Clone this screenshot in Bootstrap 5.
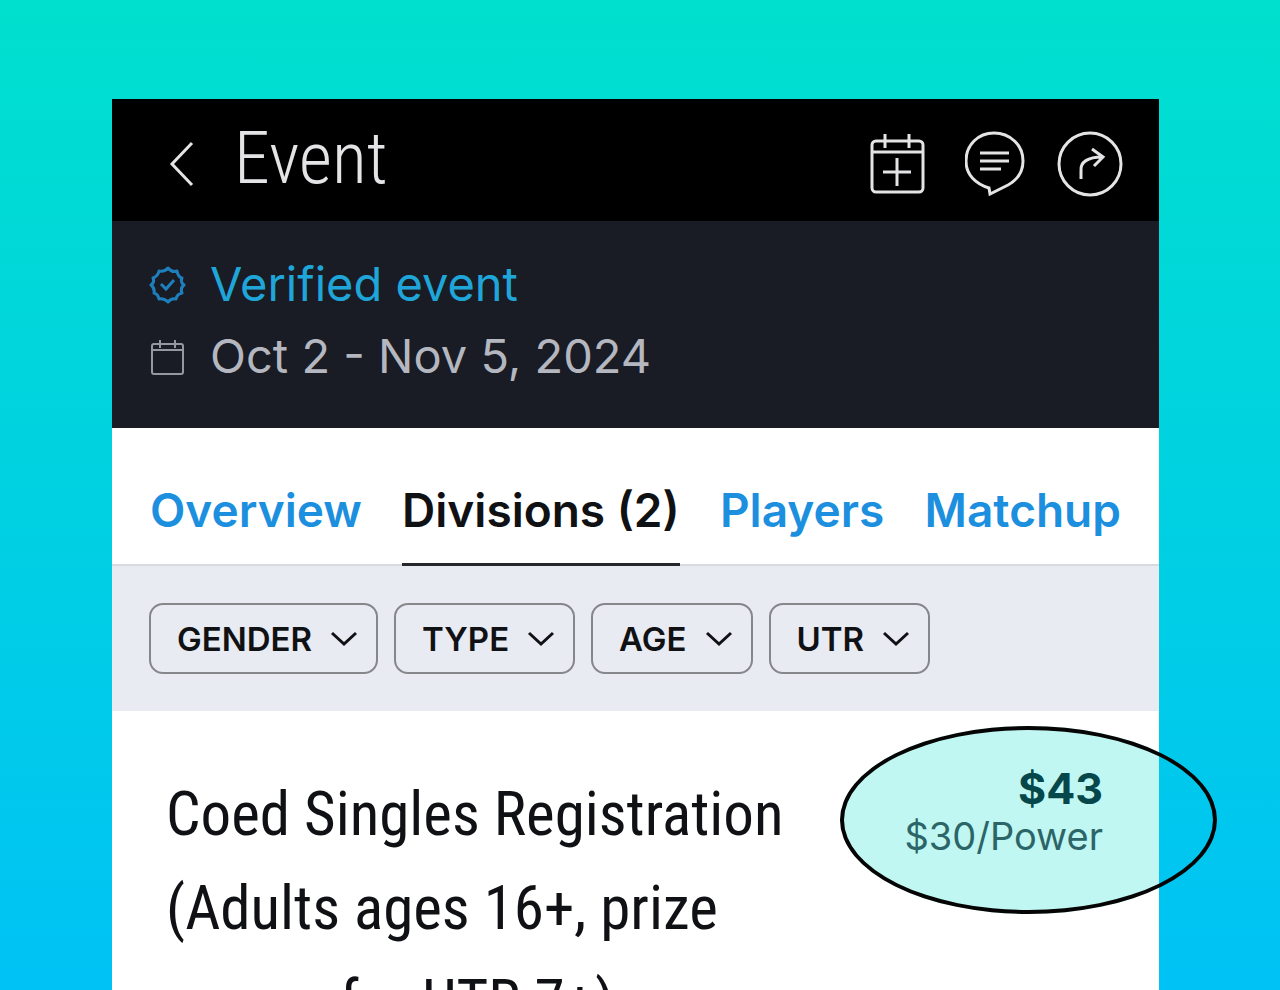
<!DOCTYPE html>
<html lang="en">
<head>
<meta charset="utf-8">
<meta name="viewport" content="width=device-width, initial-scale=1">
<title>Event</title>
<link href="https://cdn.jsdelivr.net/npm/bootstrap@5.3.0/dist/css/bootstrap.min.css" rel="stylesheet">
<style>
  body { font-family: Inter, "Liberation Sans", sans-serif; color: #101114; }
  .stage { padding: 99px 121px 0 112px; background: linear-gradient(#00e0ce, #00c2f5); }
  .display-type { font-family: "Roboto Condensed", "Liberation Sans Narrow", "Liberation Sans", sans-serif; font-weight: 400; }
  .topbar { height: 122px; padding: 8px 36px 0 56px; background: #000; color: #e4e4e6; }
  .topbar h1 { padding: 0 0 10px 40px; font-size: 72px; line-height: 80px; font-weight: 300; }
  .topbar .btn { color: inherit; }
  .details { height: 207px; padding: 27px 36px; background: #191c24; font-size: 47px; line-height: 72px; }
  .details .verified { color: #1fa5d8; }
  .details .when { color: #b4b7bf; }
  .tabs { height: 138px; padding: 0 38px; border-bottom: 2px solid #d7dbe1; font-size: 46px; font-weight: 600; }
  .tabs .nav-link { padding: 54px 0 0; line-height: 56px; color: #1c8fde; margin-bottom: -2px; border-bottom: 3px solid transparent; }
  .tabs .nav-link.active { color: #101114; border-bottom-color: #26272a; }
  .filters { height: 145px; padding: 0 37px; background: #e8ebf1; gap: 16px; }
  .filters .btn { height: 71px; padding: 0 18px 0 26px; border: 2px solid #85878b; border-radius: 14px; color: #101114; font-size: 33px; line-height: 40px; font-weight: 600; gap: 18px; }
  .division { padding: 49px 56px 0 54px; }
  .division h2 { max-width: 640px; padding-top: 7px; font-size: 61px; line-height: 94px; }
  .price { text-align: right; color: #05474a; }
  .price strong { font-size: 43px; line-height: 56px; font-weight: 700; }
  .price span { font-size: 38px; line-height: 40px; color: #2c6568; }
  .highlight { position: absolute; right: -58px; top: 15px; width: 377px; height: 188px; border: 4px solid #050505; border-radius: 50%; pointer-events: none; }
  .highlight-fill { position: absolute; inset: 0; overflow: hidden; }
  .highlight-fill .highlight { background: #c0f7f2; border-color: transparent; }
</style>
</head>
<body>
<div class="stage vh-100 overflow-hidden d-flex flex-column">
  <main class="bg-white flex-grow-1 d-flex flex-column">
    <header class="topbar d-flex align-items-center flex-shrink-0">
      <button class="btn border-0 p-0" type="button" aria-label="Back">
        <svg width="26" height="46" viewBox="0 0 26 46" fill="none" stroke="currentColor" stroke-width="3"><path d="M24 2 4 23l20 21"/></svg>
      </button>
      <h1 class="display-type m-0 me-auto">Event</h1>
      <div class="d-flex align-items-center">
        <button class="btn border-0 p-0" type="button" aria-label="Add to calendar">
          <svg width="56" height="64" viewBox="0 0 56 64" fill="none" stroke="currentColor" stroke-width="3"><rect x="3" y="9" width="51" height="51" rx="4"/><path d="M3 20h51M16 2v14M40 2v14M28 26v28M14 40h28"/></svg>
        </button>
        <button class="btn border-0 p-0 ms-4 px-3" type="button" aria-label="Messages">
          <svg width="60" height="66" viewBox="0 0 60 66" fill="none" stroke="currentColor" stroke-width="3"><path d="M24 57C11 53 1 44 1 30 1 14 13 2 29 2s29 12 29 28c0 12-6 19-15 24L25 63z"/><path d="M15 22h29M15 30h29M15 38h21"/></svg>
        </button>
        <button class="btn border-0 p-0 ms-3" type="button" aria-label="Share">
          <svg width="66" height="66" viewBox="0 0 66 66" fill="none" stroke="currentColor" stroke-width="3"><circle cx="33" cy="33" r="31"/><path d="M24 48V40c-1-9 7-14 21-14M35 18l11 8-9 9"/></svg>
        </button>
      </div>
    </header>
    <section class="details flex-shrink-0">
      <div class="verified d-flex align-items-center">
        <svg class="me-4" width="38" height="40" viewBox="0 0 38 40" fill="none" stroke="#1f7fbd" stroke-width="3"><path d="M20 4q4 5 9 3 1 6 5 7-2 4 2 7-4 3-2 8-5 1-6 6-5-1-8 3-4-4-9-3-1-5-5-6 1-5-3-8 4-3 2-7 5-2 6-7 6 1 9-3z" stroke-linejoin="round"/><path d="M13 20l5 5 8-9"/></svg>
        <span>Verified event</span>
      </div>
      <div class="when d-flex align-items-center">
        <svg class="me-4" width="38" height="40" viewBox="0 0 38 40" fill="none" stroke="currentColor" stroke-width="2" opacity=".8"><rect x="4" y="8" width="31" height="30" rx="2"/><path d="M4 14h31M12 4v8M27 4v8"/></svg>
        <span>Oct 2 - Nov 5, 2024</span>
      </div>
    </section>
    <nav class="tabs nav flex-nowrap text-nowrap justify-content-between flex-shrink-0">
      <a class="nav-link" href="#">Overview</a>
      <a class="nav-link active" aria-current="page" href="#">Divisions (2)</a>
      <a class="nav-link" href="#">Players</a>
      <a class="nav-link" href="#">Matchup</a>
    </nav>
    <div class="filters d-flex align-items-center flex-shrink-0">
      <button class="btn d-flex align-items-center" type="button">GENDER <svg width="28" height="16" viewBox="0 0 28 16" fill="none" stroke="currentColor" stroke-width="3"><path d="M2 2l12 11L26 2"/></svg></button>
      <button class="btn d-flex align-items-center" type="button">TYPE <svg width="28" height="16" viewBox="0 0 28 16" fill="none" stroke="currentColor" stroke-width="3"><path d="M2 2l12 11L26 2"/></svg></button>
      <button class="btn d-flex align-items-center" type="button">AGE <svg width="28" height="16" viewBox="0 0 28 16" fill="none" stroke="currentColor" stroke-width="3"><path d="M2 2l12 11L26 2"/></svg></button>
      <button class="btn d-flex align-items-center" type="button">UTR <svg width="28" height="16" viewBox="0 0 28 16" fill="none" stroke="currentColor" stroke-width="3"><path d="M2 2l12 11L26 2"/></svg></button>
    </div>
    <section class="division position-relative d-flex justify-content-between flex-grow-1">
      <div class="highlight-fill"><div class="highlight"></div></div>
      <h2 class="display-type m-0 position-relative">Coed Singles Registration (Adults ages 16+, prize money for UTR 7+)</h2>
      <div class="price position-relative d-flex flex-column">
        <strong>$43</strong>
        <span>$30/Power</span>
      </div>
      <div class="highlight"></div>
    </section>
  </main>
</div>
<script src="https://cdn.jsdelivr.net/npm/bootstrap@5.3.0/dist/js/bootstrap.bundle.min.js"></script>
</body>
</html>
